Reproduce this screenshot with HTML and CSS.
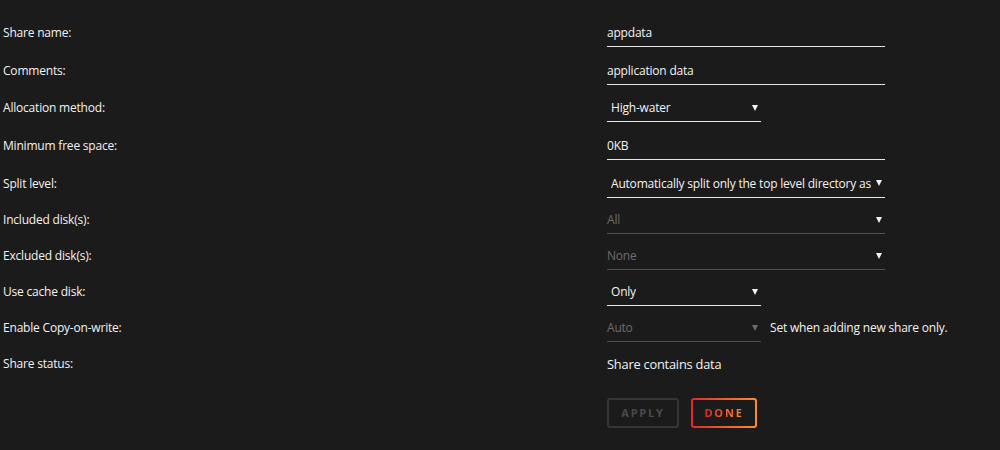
FILE: index.html
```html
<!DOCTYPE html>
<html lang="en">
<head>
    <meta charset="UTF-8">
    <title>Share settings</title>
    <link rel="stylesheet" href="styles.css">
</head>
<body>
    <form class="share-form">
        <div class="row tall">
            <div class="label">Share name:</div>
            <div class="field"><input class="text wide" type="text" value="appdata"></div>
        </div>
        <div class="row tall">
            <div class="label">Comments:</div>
            <div class="field"><input class="text wide" type="text" value="application data"></div>
        </div>
        <div class="row tall">
            <div class="label">Allocation method:</div>
            <div class="field"><div class="select short"><span>High-water</span><i class="arrow"></i></div></div>
        </div>
        <div class="row tall">
            <div class="label">Minimum free space:</div>
            <div class="field"><input class="text wide" type="text" value="0KB"></div>
        </div>
        <div class="row tall">
            <div class="label">Split level:</div>
            <div class="field"><div class="select wide"><span>Automatically split only the top level directory as</span><i class="arrow"></i></div></div>
        </div>
        <div class="row">
            <div class="label">Included disk(s):</div>
            <div class="field"><div class="select wide disabled"><span>All</span><i class="arrow"></i></div></div>
        </div>
        <div class="row">
            <div class="label">Excluded disk(s):</div>
            <div class="field"><div class="select wide disabled"><span>None</span><i class="arrow"></i></div></div>
        </div>
        <div class="row">
            <div class="label">Use cache disk:</div>
            <div class="field"><div class="select short"><span>Only</span><i class="arrow"></i></div></div>
        </div>
        <div class="row">
            <div class="label">Enable Copy-on-write:</div>
            <div class="field">
                <div class="select short disabled"><span>Auto</span><i class="arrow"></i></div>
                <span class="note">Set when adding new share only.</span>
            </div>
        </div>
        <div class="row">
            <div class="label">Share status:</div>
            <div class="field"><span class="status">Share contains data</span></div>
        </div>
        <div class="buttons">
            <button type="button" class="btn apply" disabled>APPLY</button>
            <button type="button" class="btn done"><span>DONE</span></button>
        </div>
    </form>
</body>
</html>
```

FILE: styles.css
```css
body {
    margin: 0;
    background: #1c1b1b;
    color: #f2f2f2;
    font-family: "Open Sans", sans-serif;
    font-size: 12px;
    letter-spacing: -0.2px;
}

.share-form {
    padding: 14px 0 0 3px;
}

.row {
    display: grid;
    grid-template-columns: 604px 1fr;
    align-items: center;
    height: 36px;
}

.row.tall {
    height: 37.6px;
}

.field {
    display: flex;
    align-items: center;
    gap: 9px;
}

.text {
    background: none;
    border: 0;
    border-bottom: 1px solid #e5e5e5;
    color: #f2f2f2;
    font: inherit;
    letter-spacing: inherit;
    padding: 6px 0 5px;
    outline: none;
}

.wide {
    width: 278px;
    box-sizing: border-box;
}

.short {
    width: 154px;
    box-sizing: border-box;
}

.select {
    display: flex;
    align-items: center;
    justify-content: space-between;
    padding: 6px 3px 5px 4px;
    border-bottom: 1px solid #e5e5e5;
}

.select span {
    white-space: nowrap;
    overflow: hidden;
}

.arrow {
    width: 0;
    height: 0;
    border-left: 3px solid transparent;
    border-right: 3px solid transparent;
    border-top: 6px solid #f2f2f2;
    margin-left: 4px;
    flex-shrink: 0;
}

.select.disabled {
    padding-left: 0;
    color: #6c6c6c;
    border-bottom-color: #505050;
}

.select.short.disabled .arrow {
    border-top-color: #6c6c6c;
}

.status {
    font-size: 12.8px;
}

.buttons {
    display: flex;
    gap: 12px;
    margin: 16px 0 0 604px;
}

.btn {
    height: 30px;
    border-radius: 3px;
    font-family: "Open Sans", sans-serif;
    font-weight: bold;
    font-size: 11px;
    letter-spacing: 1.8px;
    background: #1c1b1b;
}

.apply {
    width: 72px;
    border: 2px solid #353535;
    color: #4a4a4a;
}

.done {
    width: 66px;
    border: 2px solid transparent;
    background: linear-gradient(#1c1b1b, #1c1b1b) padding-box,
                linear-gradient(90deg, #e22828, #ff8c2f) border-box;
}

.done span {
    background: linear-gradient(90deg, #e22828, #ff8c2f);
    -webkit-background-clip: text;
    color: transparent;
}
```
